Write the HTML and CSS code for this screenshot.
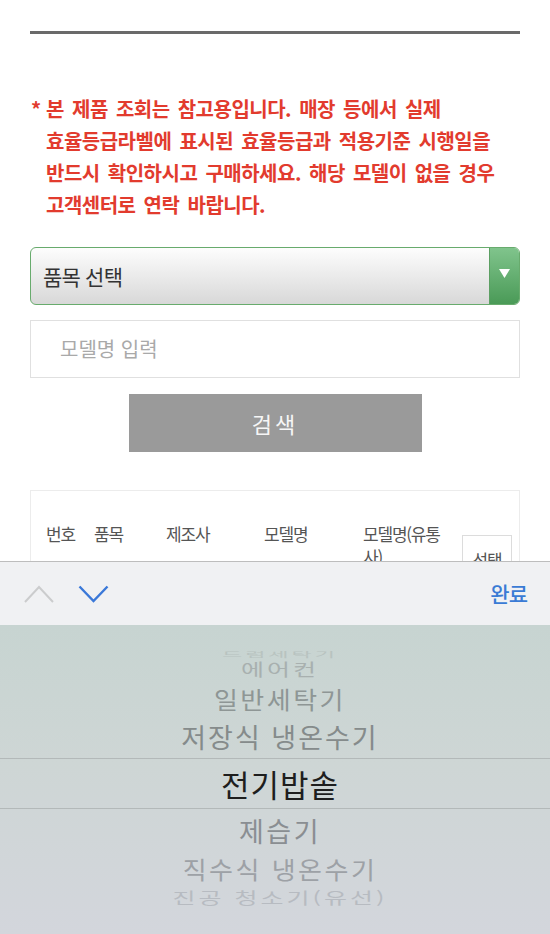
FILE: index.html
```html
<!DOCTYPE html>
<html lang="ko">
<head>
    <meta charset="UTF-8">
    <meta name="viewport" content="width=device-width, initial-scale=1.0">
    <title>효율등급 제품 조회</title>
    <link rel="stylesheet" href="styles.css">
</head>
<body>

<div class="page">
    <div class="top-rule"></div>

    <div class="notice">
        <span class="star">*</span>
        <p class="notice-text">본 제품 조회는 참고용입니다. 매장 등에서 실제<br>효율등급라벨에 표시된 효율등급과 적용기준 시행일을<br>반드시 확인하시고 구매하세요. 해당 모델이 없을 경우<br>고객센터로 연락 바랍니다.</p>
    </div>

    <div class="select-box">
        <span class="select-label">품목 선택</span>
        <span class="select-arrow">
            <svg width="11" height="9" viewBox="0 0 11 9"><polygon points="0,0 11,0 5.5,9" fill="#fff"/></svg>
        </span>
    </div>

    <div class="input-box">
        <span class="placeholder">모델명 입력</span>
    </div>

    <div class="search-button">검색</div>

    <div class="result-table">
        <div class="table-head">
            <span class="col col-no">번호</span>
            <span class="col col-item">품목</span>
            <span class="col col-maker">제조사</span>
            <span class="col col-model">모델명</span>
            <span class="col col-model2">모델명(유통사)</span>
            <span class="col col-pick"><span class="pick-box">선택</span></span>
        </div>
    </div>
</div>

<div class="keyboard">
    <div class="toolbar">
        <div class="nav-arrows">
            <svg class="arrow-up" width="30" height="18" viewBox="0 0 30 18"><polyline points="1,17 15,2 29,17" fill="none" stroke="#cbcccd" stroke-width="2"/></svg>
            <svg class="arrow-down" width="31" height="18" viewBox="0 0 31 18"><polyline points="1.5,1.5 15.5,16 29.5,1.5" fill="none" stroke="#3a78d8" stroke-width="2.4"/></svg>
        </div>
        <span class="done">완료</span>
    </div>

    <div class="picker">
        <div class="pick-item far-top">드럼세탁기</div>
        <div class="pick-item up-3">에어컨</div>
        <div class="pick-item up-2">일반세탁기</div>
        <div class="pick-item up-1">저장식 냉온수기</div>
        <div class="pick-item selected">전기밥솥</div>
        <div class="pick-item down-1">제습기</div>
        <div class="pick-item down-2">직수식 냉온수기</div>
        <div class="pick-item down-3">진공 청소기(유선)</div>
    </div>
</div>

</body>
</html>
```

FILE: styles.css
```css
body {
    margin: 0;
    background-color: #fff;
    font-family: "Noto Sans CJK KR", "Noto Sans", sans-serif;
    height: 934px;
    overflow: hidden;
}
.page {
    padding: 0 30px;
}
.top-rule {
    margin-top: 31px;
    height: 3px;
    background-color: #6a6a6a;
}

/* notice */
.notice {
    display: flex;
    margin-top: 59px;
    color: #e23b2e;
    font-weight: bold;
    font-size: 20px;
    line-height: 32px;
}
.star {
    width: 15px;
    padding-left: 1px;
}
.notice-text {
    margin: 0;
    letter-spacing: -0.5px;
    word-spacing: 3px;
    white-space: nowrap;
}

/* form */
.select-box {
    display: flex;
    margin-top: 26px;
    height: 58px;
    box-sizing: border-box;
    border: 1px solid #68ab6d;
    border-radius: 6px;
    overflow: hidden;
    background: linear-gradient(to bottom, #fdfdfd, #d8d8d8);
}
.select-label {
    flex: 1;
    padding-left: 12px;
    font-size: 21px;
    line-height: 56px;
    letter-spacing: -0.8px;
    color: #333;
}
.select-arrow {
    width: 30px;
    display: flex;
    justify-content: center;
    align-items: center;
    padding-bottom: 6px;
    box-sizing: border-box;
    border-left: 1px solid #5c9f63;
    background: linear-gradient(to bottom, #80c48c, #4a9a57);
}
.input-box {
    margin-top: 15px;
    height: 58px;
    box-sizing: border-box;
    border: 1px solid #e0e0e0;
    padding-left: 29px;
}
.placeholder {
    font-size: 20px;
    line-height: 56px;
    color: #a9a9a9;
}
.search-button {
    margin: 16px auto 0;
    width: 293px;
    height: 58px;
    background-color: #9a9a9a;
    color: #f6f6f6;
    font-size: 22px;
    line-height: 58px;
    letter-spacing: 3px;
    text-align: center;
}

/* result table */
.result-table {
    margin-top: 38px;
    height: 200px;
    border: 1px solid #ececec;
    padding: 31px 0 0 15px;
    box-sizing: border-box;
}
.table-head {
    display: flex;
    font-size: 17px;
    line-height: 23px;
    letter-spacing: -1.2px;
    color: #555;
}
.col-no { width: 48px; }
.col-item { width: 72px; }
.col-maker { width: 98px; }
.col-model { width: 99px; }
.col-model2 { width: 86px; }
.col-pick {
    padding-left: 13px;
}
.pick-box {
    display: block;
    margin-top: 13px;
    width: 50px;
    height: 60px;
    box-sizing: border-box;
    border: 1px solid #dcdcdc;
    padding-top: 12px;
    text-align: center;
}

/* keyboard overlay */
.keyboard {
    position: fixed;
    left: 0;
    right: 0;
    bottom: 0;
    height: 373px;
}
.toolbar {
    display: flex;
    justify-content: space-between;
    align-items: center;
    height: 64px;
    box-sizing: border-box;
    border-top: 1px solid #bdbdbd;
    background-color: #f0f1f3;
    padding: 0 23px 2px 24px;
}
.nav-arrows {
    display: flex;
    gap: 24px;
    padding-top: 2px;
}
.done {
    font-size: 21px;
    font-weight: 500;
    letter-spacing: -1px;
    color: #3a7bd5;
}
.picker {
    height: 309px;
    padding: 15px 0 0 10px;
    box-sizing: border-box;
    background: linear-gradient(to bottom, #c7d4d1 0%, #ced6d5 45%, #d3d6dc 100%);
    overflow: hidden;
}
.pick-item {
    display: flex;
    justify-content: center;
    align-items: center;
    line-height: 1;
    white-space: nowrap;
}
.far-top {
    height: 16px;
    font-size: 22px;
    letter-spacing: 3px;
    color: #b8c3c0;
    transform: scaleY(0.3);
    transform-origin: bottom;
}
.up-3 {
    height: 26px;
    font-size: 25px;
    letter-spacing: 3px;
    color: #a8b0af;
    transform: scaleY(0.66);
}
.up-2 {
    height: 33px;
    font-size: 26px;
    letter-spacing: 2.5px;
    color: #8e9695;
    transform: scaleY(0.9);
}
.up-1 {
    height: 43px;
    font-size: 27px;
    letter-spacing: 2px;
    color: #858b8b;
}
.selected {
    height: 51px;
    box-sizing: border-box;
    margin: 0 0 0 -10px;
    padding-left: 10px;
    border-top: 1px solid #b3b9b9;
    border-bottom: 1px solid #b3b9b9;
    font-size: 31px;
    letter-spacing: 1px;
    color: #1e1e1e;
}
.down-1 {
    height: 42px;
    font-size: 27px;
    letter-spacing: 2.5px;
    color: #8a8e92;
}
.down-2 {
    height: 36px;
    font-size: 26px;
    letter-spacing: 2.5px;
    color: #9da1a6;
    transform: scaleY(0.93);
}
.down-3 {
    height: 21px;
    font-size: 25px;
    letter-spacing: 3px;
    color: #b7bbc1;
    transform: scaleY(0.64);
}
```
